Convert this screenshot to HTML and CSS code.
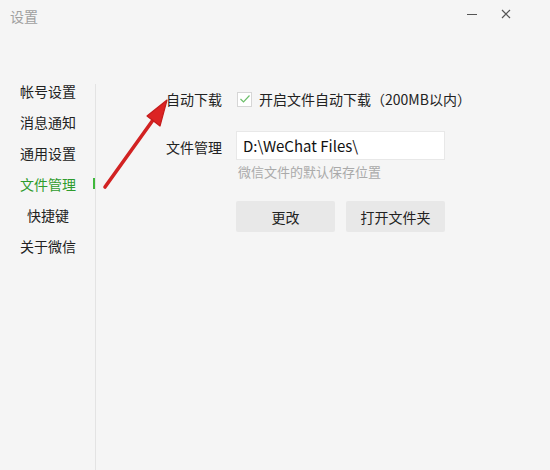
FILE: index.html
```html
<!DOCTYPE html>
<html lang="zh">
<head>
<meta charset="utf-8">
<link rel="stylesheet" href="styles.css">
</head>
<body>
<div class="window">
  <div class="titlebar">
    <span class="title">设置</span>
    <div class="controls">
      <span class="min"></span>
      <svg class="close" width="10" height="10" viewBox="0 0 10 10"><path d="M1 1L9 9M9 1L1 9" stroke="#555" stroke-width="1.2"/></svg>
    </div>
  </div>
  <div class="body">
    <nav class="sidebar">
      <div class="item">帐号设置</div>
      <div class="item">消息通知</div>
      <div class="item">通用设置</div>
      <div class="item active">文件管理</div>
      <div class="item">快捷键</div>
      <div class="item">关于微信</div>
    </nav>
    <main class="content">
      <div class="row">
        <span class="label">自动下载</span>
        <label class="check"><span class="box"><svg width="12" height="10" viewBox="0 0 12 10"><path d="M1.5 5L4.5 8L10.5 1.5" fill="none" stroke="#6cbf6a" stroke-width="1.2"/></svg></span>开启文件自动下载（200MB以内）</label>
      </div>
      <div class="row row2">
        <span class="label">文件管理</span>
        <div class="field">
          <div class="input">D:\WeChat Files\</div>
          <div class="hint">微信文件的默认保存位置</div>
          <div class="buttons">
            <button class="btn">更改</button>
            <button class="btn">打开文件夹</button>
          </div>
        </div>
      </div>
    </main>
  </div>
  <svg class="arrow" width="550" height="470" viewBox="0 0 550 470">
    <path d="M105 187 L153 120" stroke="#d22222" stroke-width="3.6" stroke-linecap="round" fill="none"/>
    <path d="M167 100 L147 116 L160 126 Z" fill="#dc2424" stroke="#c41b1b" stroke-width="1.2" stroke-linejoin="round"/>
  </svg>
</div>
</body>
</html>
```
FILE: styles.css
```css
* { box-sizing: border-box; }
html, body { margin: 0; padding: 0; }
body {
  width: 550px;
  height: 470px;
  background: #f5f5f5;
  font-family: "Noto Sans CJK SC", "Liberation Sans", sans-serif;
  font-size: 14px;
  color: #222;
  overflow: hidden;
}
.window { position: relative; width: 550px; height: 470px; }
.titlebar {
  height: 84px;
  display: flex;
  justify-content: space-between;
  align-items: flex-start;
  padding: 6px 0 0 10px;
}
.title { color: #a0a0a0; font-size: 14px; line-height: 20px; }
.controls { display: flex; align-items: center; gap: 24px; padding: 3px 39px 0 0; }
.min { width: 10px; height: 1px; background: #555; }
.close { display: block; }
.body { display: flex; height: 386px; }
.sidebar {
  width: 96px;
  border-right: 1px solid #e3e3e3;
  padding: 0 0 0 20px;
}
.item {
  width: 56px;
  height: 31px;
  line-height: 16px;
  text-align: center;
  position: relative;
  display: flex;
  align-items: center;
  justify-content: center;
}
.sidebar .item:first-child { margin-top: -9px; }
.item.active { color: #2f9c2d; }
.item.active::after {
  content: "";
  position: absolute;
  right: -19px;
  top: 10px;
  width: 2px;
  height: 11px;
  background: #3fb83c;
}
.content { flex: 1; padding: 5px 0 0 70px; }
.row { display: flex; align-items: center; }
.label { width: 70px; flex: none; }
.check { display: flex; align-items: center; gap: 7px; }
.box {
  width: 15px; height: 15px;
  border: 1px solid #d6d6d6;
  background: #fff;
  display: flex; align-items: center; justify-content: center;
  margin-left: 1px;
}
.row2 { margin-top: 22px; align-items: flex-start; }
.row2 .label { margin-top: 6px; }
.field { display: flex; flex-direction: column; }
.input {
  width: 209px; height: 29px;
  background: #fff;
  border: 1px solid #e8e8e8;
  padding: 0 6px;
  line-height: 27px;
  font-size: 15px;
  color: #111;
}
.hint { color: #aaa; font-size: 13px; margin: 3px 0 0 2px; line-height: 18px; }
.buttons { display: flex; gap: 11px; margin-top: 20px; }
.btn {
  width: 99px; height: 31px;
  border: none;
  border-radius: 2px;
  background: #e8e8e8;
  font-family: inherit;
  font-size: 14px;
  color: #222;
  padding: 0;
}
.arrow { position: absolute; left: 0; top: 0; pointer-events: none; }
```
